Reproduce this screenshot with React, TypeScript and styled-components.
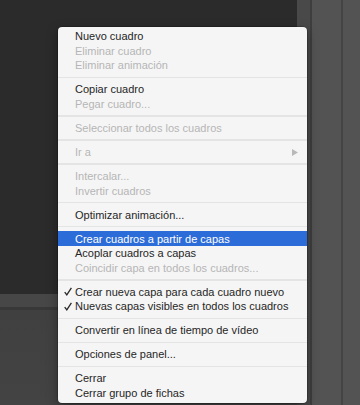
import { createGlobalStyle, styled } from "styled-components";

const GlobalStyle = createGlobalStyle`
  html, body {
    margin: 0;
    padding: 0;
    background: #2b2b2b;
  }
  body {
    font-family: "Liberation Sans", Arial, sans-serif;
    -webkit-font-smoothing: antialiased;
  }
`;

const Page = styled.div`
  position: relative;
  display: grid;
  grid-template-columns: 297px 13px 2px 29px 2px 1fr;
  width: 360px;
  height: 405px;
  overflow: hidden;
`;

const Workspace = styled.div`
  display: flex;
  flex-direction: column;
`;

const Canvas = styled.div`
  height: 294px;
  background: #2b2b2b;
`;

const TabBar = styled.div`
  height: 13px;
  background: #474747;
  border-bottom: 3px solid #383838;
`;

const Panel = styled.div`
  flex: 1;
  background: linear-gradient(#404040, #434343);
`;

const Strip = styled.div<{ $tone: string }>`
  background: ${(p) => p.$tone};
`;

const Menu = styled.div`
  position: absolute;
  left: 58px;
  top: 27px;
  width: 249px;
  padding: 2px 0 3px;
  background: #f5f5f5;
  border-radius: 4px;
  box-shadow: 0 0 0 0.5px rgba(0, 0, 0, 0.35), 0 4px 12px rgba(0, 0, 0, 0.35);
  font-size: 11px;
`;

const Item = styled.div<{ $disabled?: boolean; $active?: boolean }>`
  position: relative;
  display: flex;
  align-items: center;
  height: 14.6px;
  padding-left: 17px;
  white-space: nowrap;
  color: ${(p) => (p.$active ? "#ffffff" : p.$disabled ? "#b6b6b6" : "#262626")};
  background: ${(p) => (p.$active ? "#2c6cd8" : "transparent")};
`;

const Check = styled.svg`
  position: absolute;
  left: 5.5px;
  top: 3px;
`;

const Arrow = styled.svg`
  position: absolute;
  right: 9px;
  top: 4px;
`;

const Separator = styled.div`
  height: 9.4px;
  display: flex;
  align-items: center;
  &::after {
    content: "";
    flex: 1;
    height: 1.5px;
    background: #e4e4e4;
  }
`;

type Entry =
  | { sep: true }
  | { label: string; disabled?: boolean; active?: boolean; checked?: boolean; sub?: boolean };

const entries: Entry[] = [
  { label: "Nuevo cuadro" },
  { label: "Eliminar cuadro", disabled: true },
  { label: "Eliminar animación", disabled: true },
  { sep: true },
  { label: "Copiar cuadro" },
  { label: "Pegar cuadro...", disabled: true },
  { sep: true },
  { label: "Seleccionar todos los cuadros", disabled: true },
  { sep: true },
  { label: "Ir a", disabled: true, sub: true },
  { sep: true },
  { label: "Intercalar...", disabled: true },
  { label: "Invertir cuadros", disabled: true },
  { sep: true },
  { label: "Optimizar animación..." },
  { sep: true },
  { label: "Crear cuadros a partir de capas", active: true },
  { label: "Acoplar cuadros a capas" },
  { label: "Coincidir capa en todos los cuadros...", disabled: true },
  { sep: true },
  { label: "Crear nueva capa para cada cuadro nuevo", checked: true },
  { label: "Nuevas capas visibles en todos los cuadros", checked: true },
  { sep: true },
  { label: "Convertir en línea de tiempo de vídeo" },
  { sep: true },
  { label: "Opciones de panel..." },
  { sep: true },
  { label: "Cerrar" },
  { label: "Cerrar grupo de fichas" },
];

export default function App() {
  return (
    <>
      <GlobalStyle />
      <Page>
        <Workspace>
          <Canvas />
          <TabBar />
          <Panel />
        </Workspace>
        <Strip $tone="#494949" />
        <Strip $tone="#3e3e3e" />
        <Strip $tone="#535353" />
        <Strip $tone="#444444" />
        <Strip $tone="#535353" />

        <Menu>
          {entries.map((e, i) =>
            "sep" in e ? (
              <Separator key={i} />
            ) : (
              <Item key={i} $disabled={e.disabled} $active={e.active}>
                {e.checked ? (
                  <Check width="8" height="9" viewBox="0 0 8 9">
                    <path d="M0.7 5.2 L2.8 7.9 L7.4 0.8" fill="none" stroke="#2a2a2a" strokeWidth="1.3" />
                  </Check>
                ) : null}
                {e.label}
                {e.sub ? (
                  <Arrow width="6" height="7" viewBox="0 0 6 7">
                    <polygon points="0,0 6,3.5 0,7" fill="#b9b9b9" />
                  </Arrow>
                ) : null}
              </Item>
            )
          )}
        </Menu>
      </Page>
    </>
  );
}
